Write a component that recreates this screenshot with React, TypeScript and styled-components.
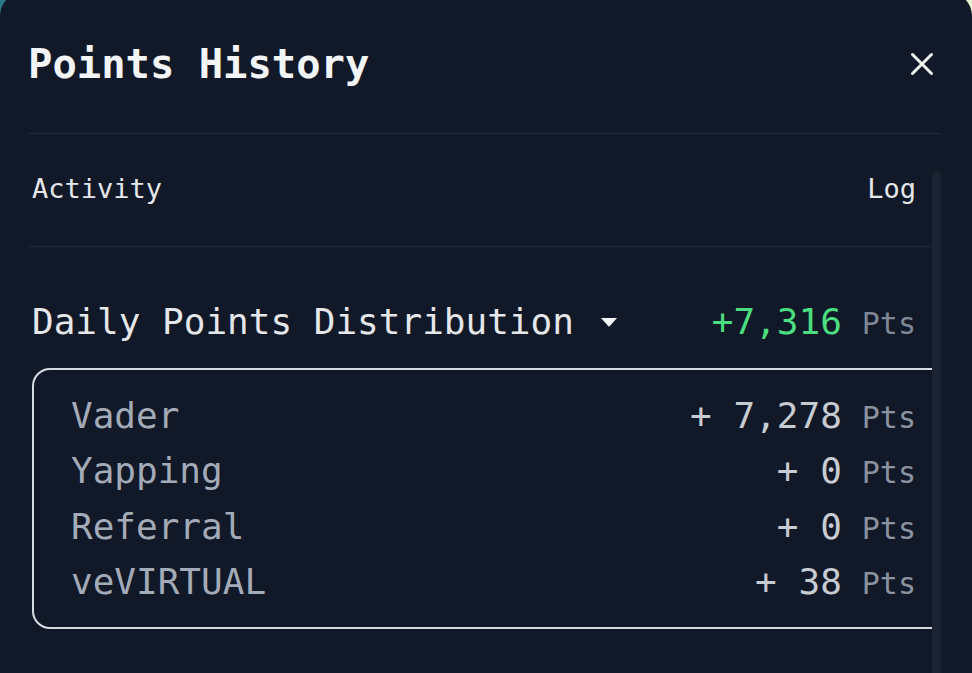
import styled, { createGlobalStyle } from 'styled-components'

const GlobalStyle = createGlobalStyle`
  html, body {
    margin: 0;
    padding: 0;
    height: 100%;
    overflow: hidden;
    background: linear-gradient(90deg, #2b7884 0%, #6fa7a0 50%, #e8f6d0 100%);
  }
  * {
    box-sizing: border-box;
  }
`

const font = `"DejaVu Sans Mono", "Liberation Mono", monospace`

const breakdown = [
  { label: 'Vader', value: '7,278' },
  { label: 'Yapping', value: '0' },
  { label: 'Referral', value: '0' },
  { label: 'veVIRTUAL', value: '38' },
]

export default function App() {
  return (
    <>
      <GlobalStyle />
      <Modal>
        <TitleRow>
          <Title>Points History</Title>
          <CloseButton aria-label="Close">
            <svg width="24" height="24" viewBox="0 0 24 24" fill="none">
              <path
                d="M2.5 2.5 L21.5 21.5 M21.5 2.5 L2.5 21.5"
                stroke="#f5f5f5"
                strokeWidth="3"
                strokeLinecap="round"
              />
            </svg>
          </CloseButton>
        </TitleRow>
        <Divider />
        <Body>
          <ScrollArea>
            <TableHead>
              <HeadCell>Activity</HeadCell>
              <HeadCell>Log</HeadCell>
            </TableHead>
            <DailyRow>
              <DailyLabel>
                Daily Points Distribution
                <svg width="18" height="10" viewBox="0 0 18 10">
                  <path d="M1 1 H17 L9.6 9.2 Q9 9.8 8.4 9.2 Z" fill="#f3f4f6" />
                </svg>
              </DailyLabel>
              <Amount>
                <Total>+7,316</Total>
                <Unit $dim>Pts</Unit>
              </Amount>
            </DailyRow>
            <BreakdownBox>
              {breakdown.map((item) => (
                <BreakdownRow key={item.label}>
                  <ItemLabel>{item.label}</ItemLabel>
                  <Amount>
                    <ItemValue>+ {item.value}</ItemValue>
                    <Unit>Pts</Unit>
                  </Amount>
                </BreakdownRow>
              ))}
            </BreakdownBox>
          </ScrollArea>
          <ScrollRail />
        </Body>
      </Modal>
    </>
  )
}

const Modal = styled.div`
  margin-top: -8px;
  height: 720px;
  background: #111827;
  border-radius: 24px;
  padding: 0 31px 0 28px;
  display: flex;
  flex-direction: column;
  font-family: ${font};
`

const TitleRow = styled.div`
  display: flex;
  justify-content: space-between;
  align-items: center;
  padding-top: 48px;
`

const Title = styled.h1`
  margin: 0;
  font-size: 40.5px;
  line-height: 48px;
  font-weight: 700;
  color: #f3f4f6;
`

const CloseButton = styled.button`
  display: flex;
  align-items: center;
  justify-content: center;
  background: none;
  border: none;
  padding: 0;
  margin-right: 7px;
  cursor: pointer;
`

const Divider = styled.div`
  height: 1px;
  background: #1f2937;
  margin-top: 45px;
`

const Body = styled.div`
  flex: 1;
  min-height: 0;
  margin-top: 38px;
  display: flex;
`

const ScrollArea = styled.div`
  flex: 1;
  min-width: 0;
  overflow: hidden;
`

const ScrollRail = styled.div`
  width: 9px;
  flex-shrink: 0;
  background: #1c2433;
  border-radius: 5px 5px 0 0;
`

const TableHead = styled.div`
  display: flex;
  justify-content: space-between;
  padding: 0 16px 40px 4px;
  border-bottom: 1px solid #1f2937;
`

const HeadCell = styled.span`
  font-size: 27px;
  line-height: 34px;
  color: #e5e7eb;
`

const DailyRow = styled.div`
  display: flex;
  justify-content: space-between;
  align-items: baseline;
  margin-top: 53px;
  padding: 0 16px 0 4px;
`

const DailyLabel = styled.span`
  display: inline-flex;
  align-items: center;
  gap: 26px;
  font-size: 36px;
  line-height: 44px;
  color: #e5e7eb;
`

const Amount = styled.span`
  display: inline-flex;
  align-items: baseline;
  gap: 20px;
`

const Total = styled.span`
  font-size: 36px;
  line-height: 44px;
  color: #4ade80;
`

const Unit = styled.span<{ $dim?: boolean }>`
  font-size: 30px;
  line-height: 1;
  color: ${(p) => (p.$dim ? '#7e8795' : '#8a929f')};
`

const BreakdownBox = styled.div`
  margin: 24px -22px 0 4px;
  border: 2px solid #d7dbe0;
  border-radius: 18px;
  padding: 18px 36px 18px 37px;
`

const BreakdownRow = styled.div`
  display: flex;
  justify-content: space-between;
  align-items: baseline;
  height: 55.3px;
  line-height: 55px;
`

const ItemLabel = styled.span`
  font-size: 36px;
  color: #a3abb8;
`

const ItemValue = styled.span`
  font-size: 36px;
  color: #c7cbd2;
`
